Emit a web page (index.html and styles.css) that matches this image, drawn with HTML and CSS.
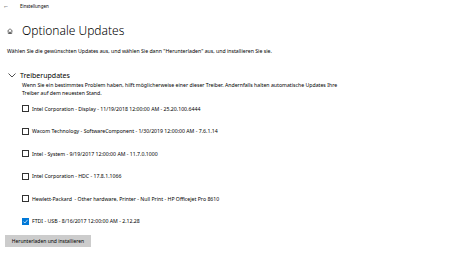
FILE: index.html
```html
<!DOCTYPE html>
<html lang="de">
<head>
    <meta charset="UTF-8">
    <title>Optionale Updates</title>
    <link rel="stylesheet" href="styles.css">
</head>
<body>
    <div class="titlebar">
        <span class="back">&#8592;</span>
        <span class="app-name">Einstellungen</span>
    </div>

    <div class="page">
        <h1 class="page-title">
            <svg class="home-icon" width="6" height="6" viewBox="0 0 12 12">
                <path d="M1 6 L6 1.5 L11 6 M2.5 5 V11 H9.5 V5 M5 11 V8 H7 V11" fill="none" stroke="#222" stroke-width="1.2"/>
            </svg>
            Optionale Updates
        </h1>
        <p class="intro">Wählen Sie die gewünschten Updates aus, und wählen Sie dann "Herunterladen" aus, und installieren Sie sie.</p>

        <div class="section">
            <div class="section-head">
                <svg class="chevron" width="8" height="5" viewBox="0 0 16 10">
                    <path d="M1 1 L8 8 L15 1" fill="none" stroke="#222" stroke-width="1.6"/>
                </svg>
                <span>Treiberupdates</span>
            </div>
            <div class="section-body">
                <p class="hint">Wenn Sie ein bestimmtes Problem haben, hilft möglicherweise einer dieser Treiber. Andernfalls halten automatische Updates Ihre Treiber auf dem neuesten Stand.</p>
                <ul class="drivers">
                    <li><span class="box"></span>Intel Corporation - Display - 11/19/2018 12:00:00 AM - 25.20.100.6444</li>
                    <li><span class="box"></span>Wacom Technology - SoftwareComponent - 1/30/2019 12:00:00 AM - 7.6.1.14</li>
                    <li><span class="box"></span>Intel - System - 9/19/2017 12:00:00 AM - 11.7.0.1000</li>
                    <li><span class="box"></span>Intel Corporation - HDC - 17.8.1.1066</li>
                    <li><span class="box"></span>Hewlett-Packard&nbsp; - Other hardware, Printer - Null Print - HP Officejet Pro 8610</li>
                    <li><span class="box checked"><svg width="7" height="7" viewBox="0 0 14 14"><path d="M3 7.2 L5.8 10 L11.2 3.6" fill="none" stroke="#fff" stroke-width="1.4"/></svg></span>FTDI - USB - 8/16/2017 12:00:00 AM - 2.12.28</li>
                </ul>
            </div>
        </div>

        <button class="install">Herunterladen und installieren</button>
    </div>
</body>
</html>
```

FILE: styles.css
```css
body {
    margin: 0;
    background-color: #ffffff;
    color: #000000;
    font-family: "Noto Sans", "Open Sans", sans-serif;
}
.titlebar {
    display: flex;
    align-items: center;
    height: 11px;
    padding-left: 3px;
    font-size: 4.5px;
}
.back {
    font-size: 6px;
    width: 17px;
}
.page {
    padding: 0 5px;
}
.page-title {
    display: flex;
    align-items: center;
    margin: 11px 0 0 2px;
    font-size: 12px;
    font-weight: 300;
}
.home-icon {
    margin-right: 9px;
}
.intro {
    margin: 8px 0 0 2px;
    font-size: 5.2px;
}
.section {
    margin-top: 16px;
}
.section-head {
    display: flex;
    align-items: center;
    margin-left: 3px;
    font-size: 7px;
}
.chevron {
    margin-right: 4px;
}
.section-body {
    padding-left: 17px;
}
.hint {
    max-width: 325px;
    margin: 1px 0 0;
    font-size: 5.2px;
    line-height: 8px;
}
.drivers {
    list-style: none;
    margin: 8px 0 0;
    padding: 0;
}
.drivers li {
    display: flex;
    align-items: center;
    height: 7px;
    margin-bottom: 15.6px;
    font-size: 5.2px;
}
.box {
    display: flex;
    width: 7px;
    height: 7px;
    box-sizing: border-box;
    border: 1px solid #333333;
    margin-right: 3px;
}
.box.checked {
    border: none;
    background-color: #0078d7;
}
.install {
    display: block;
    width: 86px;
    height: 12px;
    margin: -6px 0 0;
    padding: 0;
    border: none;
    background-color: #cccccc;
    color: #000000;
    font-family: "Noto Sans", "Open Sans", sans-serif;
    font-size: 5px;
}
```
